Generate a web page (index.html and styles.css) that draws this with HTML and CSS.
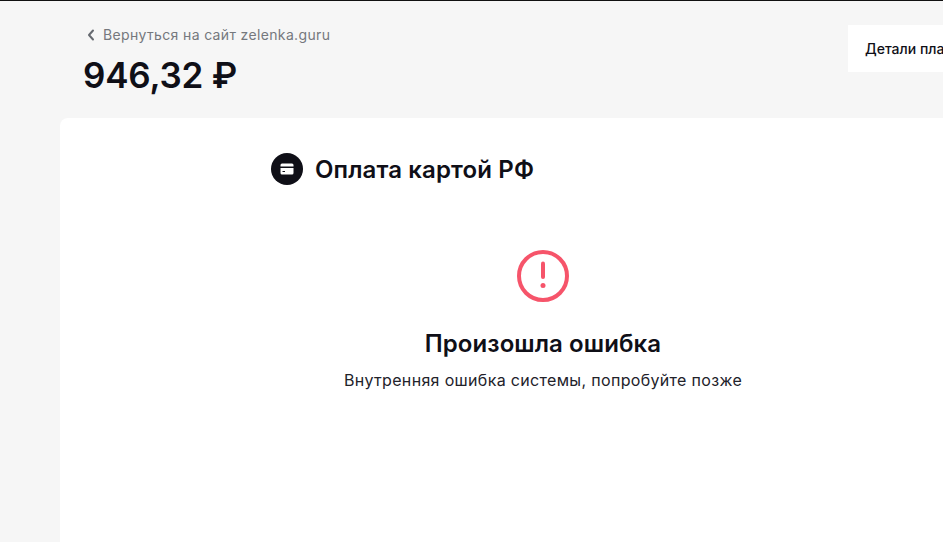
FILE: index.html
```html
<!DOCTYPE html>
<html lang="ru">
<head>
    <meta charset="UTF-8">
    <meta name="viewport" content="width=device-width, initial-scale=1.0">
    <title>Оплата картой РФ</title>
    <link rel="stylesheet" href="styles.css">
</head>
<body>
    <div class="page">
        <header class="header">
            <div class="header-info">
                <a class="back-link" href="#">
                    <svg class="back-icon" viewBox="0 0 8 12" width="8" height="12">
                        <path d="M6 1.5 L2 6 L6 10.5" fill="none" stroke="#666a70" stroke-width="2" stroke-linecap="round" stroke-linejoin="round"/>
                    </svg>
                    <span>Вернуться на сайт zelenka.guru</span>
                </a>
                <div class="amount">946,32 ₽</div>
            </div>
            <button class="details-btn">Детали платежа</button>
        </header>

        <main class="card">
            <div class="card-inner">
                <div class="method">
                    <span class="method-icon">
                        <svg viewBox="0 0 14 12" width="14" height="12">
                            <path d="M2 0.5 H12 A1.5 1.5 0 0 1 13.5 2 V3.5 H0.5 V2 A1.5 1.5 0 0 1 2 0.5 Z" fill="#fff"/>
                            <path d="M0.5 5 H13.5 V10 A1.5 1.5 0 0 1 12 11.5 H2 A1.5 1.5 0 0 1 0.5 10 Z M2.5 8 V9 H5 V8 Z" fill="#fff" fill-rule="evenodd"/>
                        </svg>
                    </span>
                    <h2 class="method-title">Оплата картой РФ</h2>
                </div>

                <div class="error">
                    <svg class="error-icon" viewBox="0 0 52 52" width="52" height="52">
                        <circle cx="26" cy="26" r="24" fill="none" stroke="#f6546a" stroke-width="4"/>
                        <path d="M26 13.5 V27" fill="none" stroke="#f6546a" stroke-width="4" stroke-linecap="round"/>
                        <circle cx="26" cy="35.5" r="2.5" fill="#f6546a"/>
                    </svg>
                    <h3 class="error-title">Произошла ошибка</h3>
                    <p class="error-text">Внутренняя ошибка системы, попробуйте позже</p>
                </div>
            </div>
        </main>
    </div>
</body>
</html>
```

FILE: styles.css
```css
* {
    margin: 0;
    padding: 0;
    box-sizing: border-box;
}

html, body {
    height: 100%;
    overflow: hidden;
}

body {
    font-family: Inter, 'Noto Sans', sans-serif;
    background: #f6f6f6;
    color: #0f0f17;
    border-top: 1px solid #111;
}

.page {
    padding-left: 60px;
    width: 1200px;
    height: 100%;
    display: flex;
    flex-direction: column;
}

.header {
    display: flex;
    height: 117px;
    padding: 24px 0 0 23px;
}

.header-info {
    width: 765px;
}

.back-link {
    display: flex;
    align-items: center;
    gap: 8px;
    padding-left: 4px;
    font-size: 14px;
    line-height: 20px;
    letter-spacing: 0.35px;
    color: #75787d;
    text-decoration: none;
}

.amount {
    margin-top: 9px;
    font-size: 35px;
    line-height: 43px;
    font-weight: 600;
    letter-spacing: -0.2px;
}

.details-btn {
    height: 47px;
    width: 200px;
    padding-left: 17px;
    text-align: left;
    font-family: inherit;
    font-size: 14px;
    font-weight: 500;
    color: #0f0f17;
    background: #fff;
    border: none;
}

.card {
    flex: 1;
    background: #fff;
    border-radius: 8px 0 0 0;
    padding: 35px 0 0 211px;
}

.card-inner {
    width: 544px;
}

.method {
    display: flex;
    align-items: center;
    gap: 12px;
    height: 32px;
}

.method-icon {
    width: 32px;
    height: 32px;
    border-radius: 50%;
    background: #0f0f17;
    display: flex;
    align-items: center;
    justify-content: center;
}

.method-title {
    padding-top: 2px;
    font-size: 24px;
    line-height: 32px;
    font-weight: 600;
    letter-spacing: 0.12px;
}

.error {
    display: flex;
    flex-direction: column;
    align-items: center;
    margin-top: 65px;
}

.error-title {
    margin-top: 26px;
    font-size: 24px;
    line-height: 32px;
    font-weight: 600;
    letter-spacing: 0.08px;
}

.error-text {
    margin-top: 8px;
    font-size: 16px;
    line-height: 24px;
    letter-spacing: 0.33px;
    color: #22222a;
}
```
